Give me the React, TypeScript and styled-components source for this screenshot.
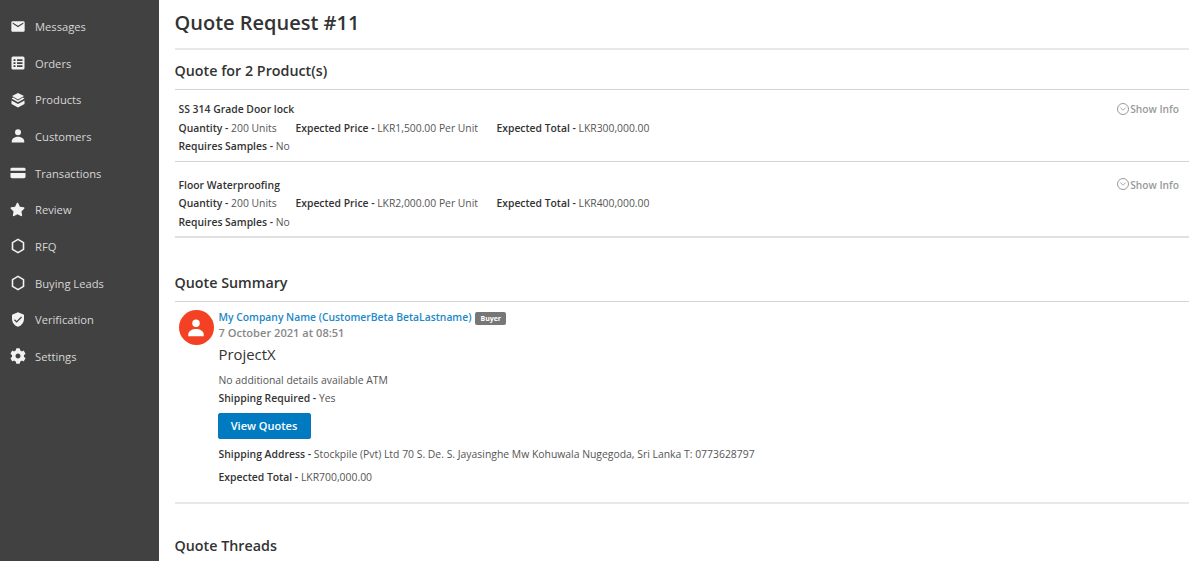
import styled, { createGlobalStyle } from 'styled-components';
import { FaCog, FaStar } from 'react-icons/fa';
import { MdEmail, MdVerifiedUser } from 'react-icons/md';
import { FiChevronDown } from 'react-icons/fi';

const GlobalStyle = createGlobalStyle`
  html, body {
    margin: 0;
    padding: 0;
    height: 100%;
    overflow: hidden;
    background: #fff;
    font-family: 'Open Sans', 'Noto Sans', sans-serif;
    color: #333;
  }
  * { box-sizing: border-box; }
`;

const OrdersIcon = () => (
  <svg width="16" height="16" viewBox="0 0 16 16">
    <path
      fill="currentColor"
      fillRule="evenodd"
      d="M3 1.500h10A1.500 1.500 0 0 1 14.500 3v10a1.500 1.500 0 0 1-1.500 1.500H3A1.500 1.500 0 0 1 1.500 13V3A1.500 1.500 0 0 1 3 1.500zM3.500 4.200v1.800h2V4.200zm3.500 0v1.800h5.500V4.200zM3.500 7.200v1.800h2V7.200zm3.500 0v1.800h5.500V7.200zM3.500 10.200v1.800h2v-1.800zm3.500 0v1.800h5.500v-1.800z"
    />
  </svg>
);

const ProductsIcon = () => (
  <svg width="16" height="16" viewBox="0 0 16 16">
    <path fill="currentColor" d="M8 1l6 3-6 3.400L2 4z" />
    <path fill="currentColor" d="M1.500 6.600l1.800-1L8 8.400l4.700-2.800 1.800 1L8 10.200z" />
    <path fill="currentColor" d="M1.500 8.400L8 12l6.500-3.600v3.500L8 15.500l-6.500-3.600z" />
  </svg>
);

const CardIcon = () => (
  <svg width="17" height="16" viewBox="0 0 17 16">
    <path fill="currentColor" d="M2 2.500h13A1.500 1.500 0 0 1 16.500 4v1.500H.5V4A1.500 1.500 0 0 1 2 2.500z" />
    <path fill="currentColor" d="M.5 8h16v4a1.500 1.500 0 0 1-1.500 1.500H2A1.500 1.500 0 0 1 .5 12z" />
  </svg>
);

const HexagonIcon = () => (
  <svg width="16" height="16" viewBox="0 0 16 16">
    <path
      fill="none"
      stroke="currentColor"
      strokeWidth="1.600"
      strokeLinejoin="round"
      d="M8 1.400l5.500 3.200v6.800L8 14.600l-5.500-3.200V4.600z"
    />
  </svg>
);

const PersonIcon = ({ size = 16 }: { size?: number }) => (
  <svg width={size} height={size} viewBox="0 0 16 16">
    <circle fill="currentColor" cx="8" cy="4.200" r="3" />
    <path fill="currentColor" d="M1.800 14.500v-1.300C1.800 10.200 5 8.700 8 8.700s6.200 1.500 6.200 4.500v1.300z" />
  </svg>
);

const navItems = [
  { label: 'Messages', icon: <MdEmail size={17} /> },
  { label: 'Orders', icon: <OrdersIcon /> },
  { label: 'Products', icon: <ProductsIcon /> },
  { label: 'Customers', icon: <PersonIcon /> },
  { label: 'Transactions', icon: <CardIcon /> },
  { label: 'Review', icon: <FaStar size={15} /> },
  { label: 'RFQ', icon: <HexagonIcon /> },
  { label: 'Buying Leads', icon: <HexagonIcon /> },
  { label: 'Verification', icon: <MdVerifiedUser size={17} /> },
  { label: 'Settings', icon: <FaCog size={16} /> },
];

const products = [
  { name: 'SS 314 Grade Door lock', price: 'LKR1,500.00 Per Unit', total: 'LKR300,000.00' },
  { name: 'Floor Waterproofing', price: 'LKR2,000.00 Per Unit', total: 'LKR400,000.00' },
];

export default function App() {
  return (
    <Page>
      <GlobalStyle />
      <Sidebar>
        {navItems.map((item) => (
          <NavItem key={item.label}>
            <NavIcon>{item.icon}</NavIcon>
            {item.label}
          </NavItem>
        ))}
      </Sidebar>

      <Main>
        <Title>Quote Request #11</Title>
        <SectionTitle>Quote for 2 Product(s)</SectionTitle>

        {products.map((p) => (
          <ProductRow key={p.name}>
            <div>
              <ProductName>{p.name}</ProductName>
              <FieldLine>
                <Field $width={117}>
                  <b>Quantity -</b> 200 Units
                </Field>
                <Field $width={201}>
                  <b>Expected Price -</b> {p.price}
                </Field>
                <Field>
                  <b>Expected Total -</b> {p.total}
                </Field>
              </FieldLine>
              <FieldLine>
                <Field>
                  <b>Requires Samples -</b> No
                </Field>
              </FieldLine>
            </div>
            <ShowInfo>
              <ShowInfoIcon>
                <FiChevronDown size={10} strokeWidth={2} />
              </ShowInfoIcon>
              Show Info
            </ShowInfo>
          </ProductRow>
        ))}

        <SummaryTitle>Quote Summary</SummaryTitle>
        <Summary>
          <Avatar>
            <PersonIcon size={20} />
          </Avatar>
          <SummaryBody>
            <AuthorLine>
              <AuthorLink>My Company Name (CustomerBeta BetaLastname)</AuthorLink>
              <Badge>Buyer</Badge>
            </AuthorLine>
            <DateLine>7 October 2021 at 08:51</DateLine>
            <ProjectName>ProjectX</ProjectName>
            <BodyLine $top={9}>No additional details available ATM</BodyLine>
            <BodyLine $top={3}>
              <b>Shipping Required -</b> Yes
            </BodyLine>
            <ViewButton>View Quotes</ViewButton>
            <BodyLine $top={8}>
              <b>Shipping Address -</b> Stockpile (Pvt) Ltd 70 S. De. S. Jayasinghe Mw Kohuwala Nugegoda, Sri Lanka T: 0773628797
            </BodyLine>
            <BodyLine $top={8}>
              <b>Expected Total -</b> LKR700,000.00
            </BodyLine>
          </SummaryBody>
        </Summary>

        <ThreadsTitle>Quote Threads</ThreadsTitle>
      </Main>
    </Page>
  );
}

const Page = styled.div`
  display: flex;
  width: 1200px;
  height: 561px;
  overflow: hidden;
`;

const Sidebar = styled.nav`
  flex: 0 0 158.5px;
  padding-top: 8.1px;
  background: #414141;
`;

const NavItem = styled.div`
  display: flex;
  align-items: center;
  height: 36.67px;
  padding-left: 9.5px;
  color: #d6d6d6;
  font-size: 11.2px;
`;

const NavIcon = styled.span`
  display: flex;
  align-items: center;
  justify-content: center;
  width: 16px;
  margin-right: 9.5px;
  color: #f2f2f2;
`;

const Main = styled.main`
  flex: 1;
  padding: 0 11px 0 16px;
`;

const Title = styled.h1`
  margin: 0;
  height: 50px;
  padding-top: 8px;
  border-bottom: 2px solid #e8e8e8;
  color: #333;
  font-size: 20px;
  font-weight: 600;
  line-height: 29px;
`;

const SectionTitle = styled.h2`
  margin: 0;
  height: 40px;
  padding-top: 11px;
  border-bottom: 1px solid #d4d4d4;
  color: #333;
  font-size: 14.3px;
  font-weight: 600;
  line-height: 20px;
`;

const ProductRow = styled.div`
  display: flex;
  justify-content: space-between;
  height: 72px;
  padding: 10px 10px 0 4px;
  border-bottom: 1px solid #d4d4d4;

  & + & {
    height: 76px;
    padding-top: 13.75px;
    border-bottom: 2px solid #e0e0e0;
  }
`;

const ProductName = styled.div`
  color: #333;
  font-size: 10.4px;
  font-weight: 600;
  line-height: 18.5px;
`;

const FieldLine = styled.div`
  display: flex;
  line-height: 18.5px;
`;

const Field = styled.span<{ $width?: number }>`
  ${(p) => (p.$width ? `width: ${p.$width}px;` : '')}
  color: #555;
  font-size: 10.35px;

  b {
    color: #333;
    font-weight: 600;
  }
`;

const ShowInfo = styled.div`
  display: flex;
  align-items: center;
  height: 18px;
  color: #999;
  font-size: 10.2px;
  font-weight: 600;
`;

const ShowInfoIcon = styled.span`
  display: flex;
  align-items: center;
  justify-content: center;
  width: 12px;
  height: 12px;
  margin: -1px 1px 0 0;
  border: 1px solid #999;
  border-radius: 50%;
`;

const SummaryTitle = styled(SectionTitle)`
  margin-top: 24px;
  height: 40px;
`;

const Summary = styled.section`
  display: flex;
  height: 202px;
  padding: 7px 0 0 4px;
  border-bottom: 2px solid #e8e8e8;
`;

const Avatar = styled.div`
  display: flex;
  flex: 0 0 35px;
  align-items: center;
  justify-content: center;
  height: 35px;
  margin: 1px 5px 0 0;
  border-radius: 50%;
  background: #f44123;
  color: #fff;
`;

const SummaryBody = styled.div`
  flex: 1;
  min-width: 0;
`;

const AuthorLine = styled.div`
  display: flex;
  align-items: center;
  height: 15px;
`;

const AuthorLink = styled.a`
  color: #1c88c7;
  font-size: 10.33px;
  font-weight: 600;
`;

const Badge = styled.span`
  margin: 4px 0 0 4px;
  padding: 0 5px;
  border-radius: 2px;
  background: #777;
  color: #fff;
  font-size: 7px;
  font-weight: 700;
  line-height: 13px;
`;

const DateLine = styled.div`
  margin-top: 1px;
  color: #888;
  font-size: 11.1px;
  font-weight: 600;
  line-height: 16px;
`;

const ProjectName = styled.div`
  margin-top: 3px;
  color: #333;
  font-size: 14.9px;
  font-weight: 500;
  line-height: 20px;
`;

const BodyLine = styled.div<{ $top?: number }>`
  margin-top: ${(p) => p.$top ?? 9}px;
  color: #555;
  font-size: 10.4px;
  line-height: 15px;

  b {
    color: #333;
    font-weight: 600;
  }
`;

const ViewButton = styled.button`
  display: block;
  width: 93px;
  height: 26px;
  margin: 7px 0 0 -1px;
  padding: 0 0 2px;
  border: 1px solid #0a76b8;
  border-radius: 2px;
  background: #007bc1;
  color: #fff;
  font-family: inherit;
  font-size: 11px;
  font-weight: 600;
`;

const ThreadsTitle = styled.h2`
  margin: 32px 0 0;
  color: #333;
  font-size: 14.3px;
  font-weight: 600;
  line-height: 20px;
`;
